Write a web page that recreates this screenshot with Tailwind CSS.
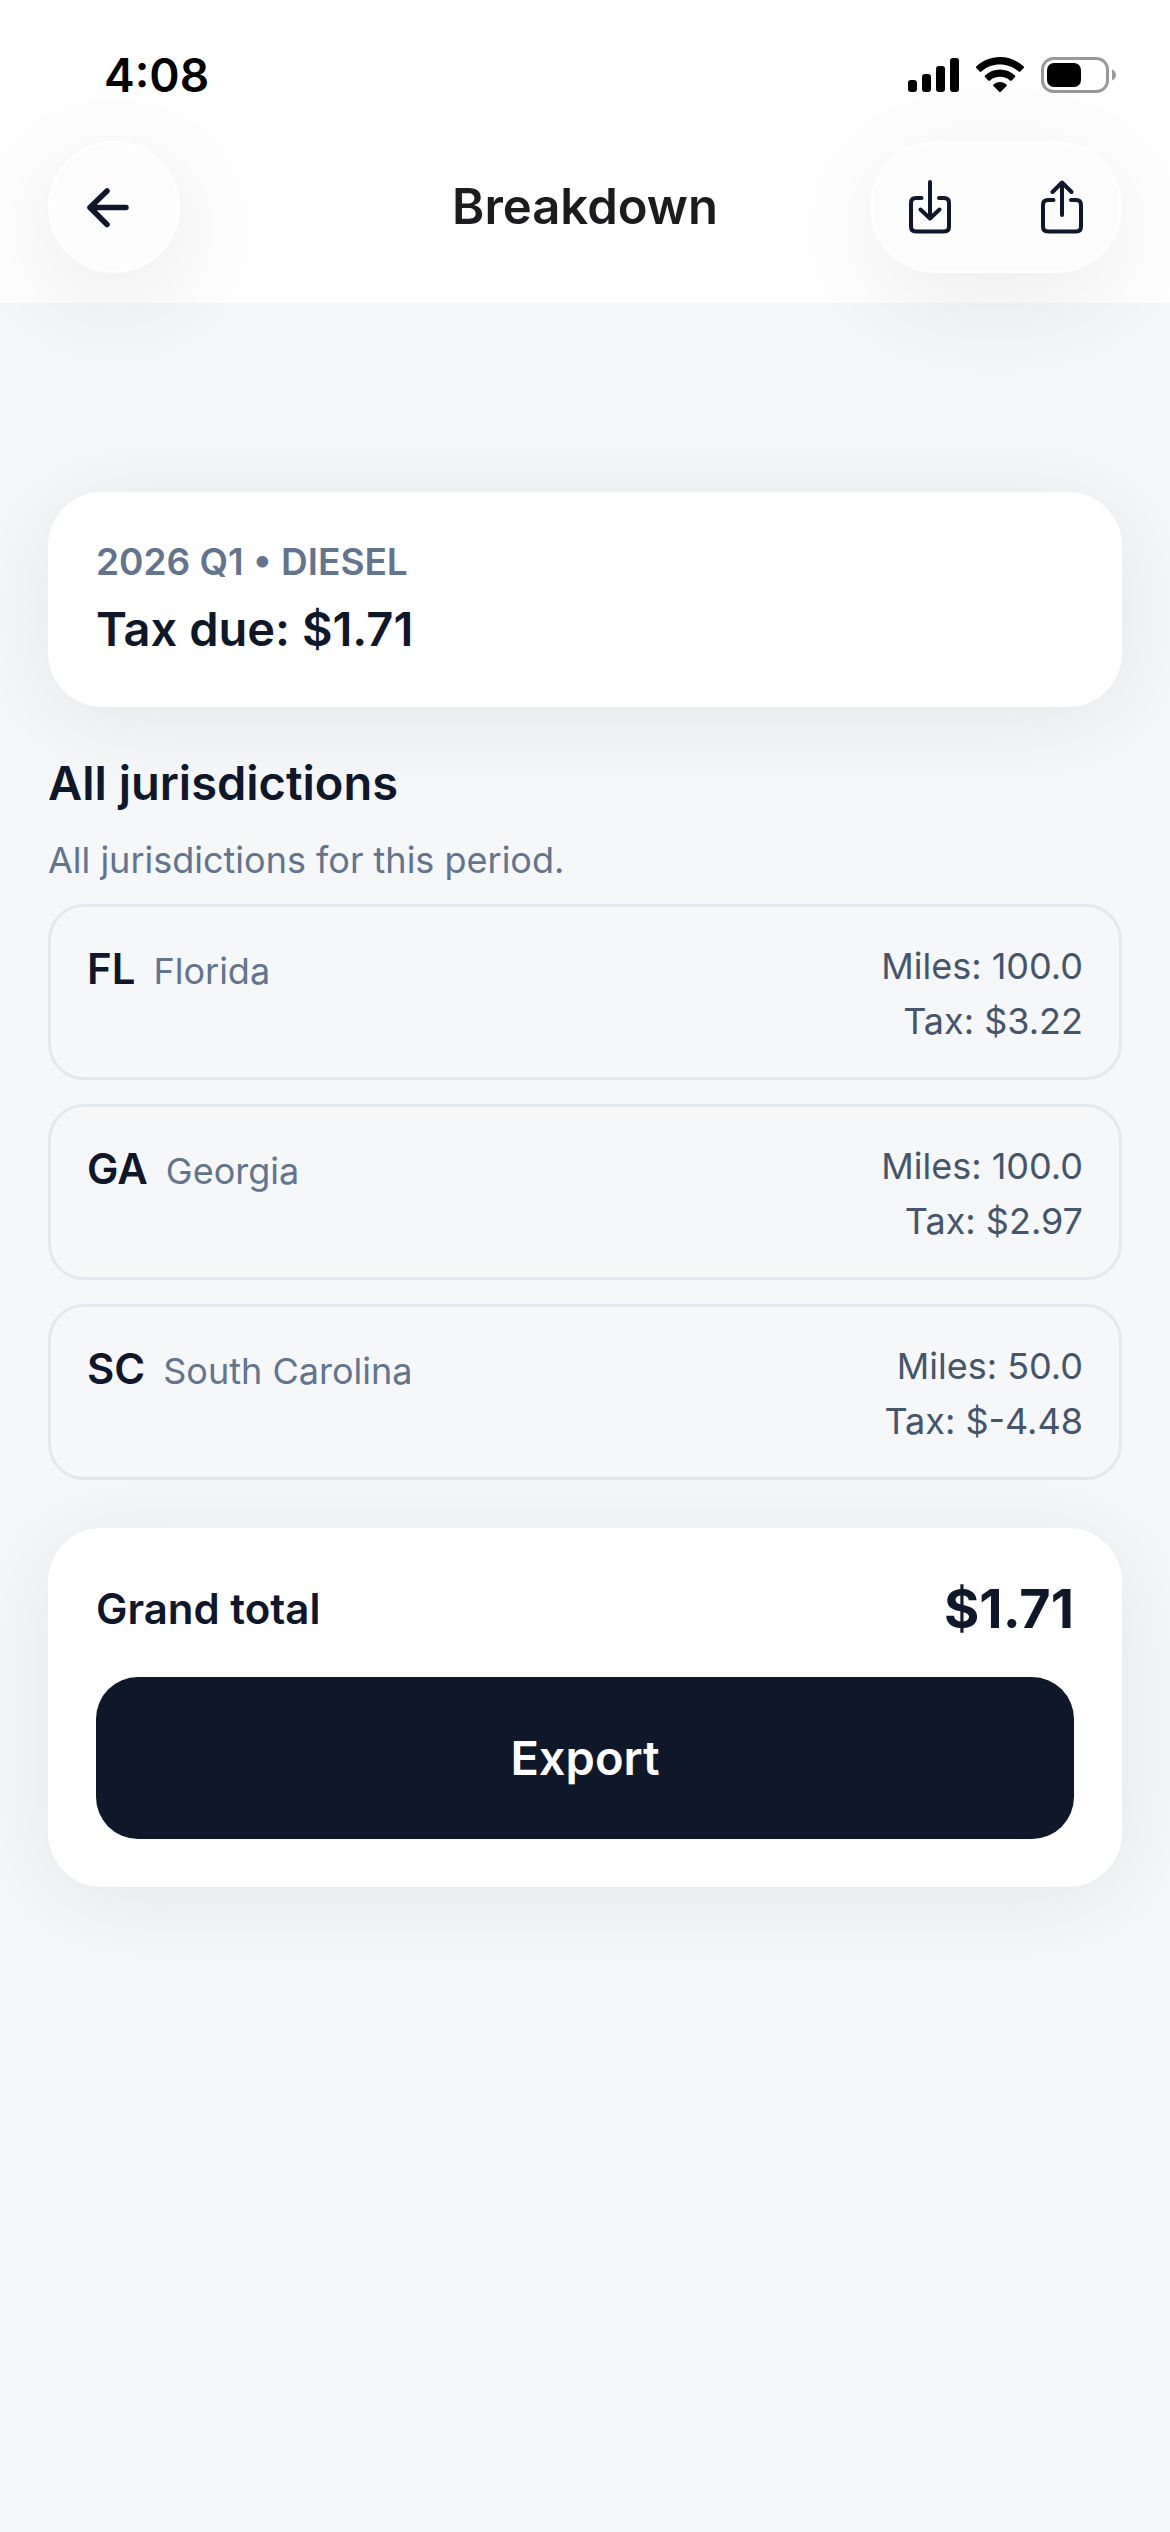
<!DOCTYPE html>
<html lang="en">

<head>
    <meta charset="UTF-8">
    <meta name="viewport" content="width=device-width, initial-scale=1.0">
    <title>Breakdown</title>
    <script src="https://cdn.jsdelivr.net/npm/@tailwindcss/browser@4"></script>
</head>

<body class="bg-[#f6f7f9] min-h-screen font-['Inter',sans-serif] text-slate-900">
    <header class="bg-white px-12 pb-[30px]">
        <!-- Status bar -->
        <div class="flex items-center justify-between h-[141px] pt-2 pl-14 pr-1 text-black">
            <span class="text-[46px] leading-[56px] font-semibold">4:08</span>
            <div class="flex items-center gap-4">
                <svg class="w-[52px] h-9" viewBox="0 0 52 36" fill="currentColor" aria-hidden="true">
                    <rect x="0" y="23" width="9" height="12" rx="3" />
                    <rect x="14" y="17" width="9" height="18" rx="3" />
                    <rect x="28" y="9" width="9" height="26" rx="3" />
                    <rect x="42" y="1" width="9" height="34" rx="3" />
                </svg>
                <svg class="w-12 h-9" viewBox="0 0 48 36" fill="currentColor" aria-hidden="true">
                    <path d="M24 0C33 0 41.500 3.500 47.700 9.500C48.200 10 48.200 10.600 47.700 11.100L44.300 14.600C43.800 15.100 43.200 15.100 42.700 14.600C37.600 9.900 31 7.400 24 7.400C17 7.400 10.400 9.900 5.300 14.600C4.800 15.100 4.200 15.100 3.700 14.600L.3 11.100C-.2 10.600 -.2 10 .3 9.500C6.500 3.500 15 0 24 0Z" />
                    <path d="M24 12.500C29.700 12.500 35 14.700 39 18.500C39.500 19 39.500 19.600 39 20.100L35.600 23.500C35.100 24 34.500 24 34 23.500C31.300 21.100 27.800 19.800 24 19.800C20.200 19.800 16.700 21.100 14 23.500C13.500 24 12.900 24 12.400 23.500L9 20.100C8.500 19.600 8.500 19 9 18.500C13 14.700 18.300 12.500 24 12.500Z" />
                    <path d="M24 25C26.500 25 28.800 25.900 30.500 27.400C31 27.900 31 28.500 30.500 29L24.800 34.800C24.300 35.300 23.700 35.300 23.200 34.800L17.500 29C17 28.500 17 27.900 17.500 27.400C19.200 25.900 21.500 25 24 25Z" />
                </svg>
                <svg class="w-[78px] h-9" viewBox="0 0 78 36" aria-hidden="true">
                    <rect x="2.500" y="1.500" width="65" height="33" rx="11" fill="none" stroke="#999" stroke-width="3" />
                    <rect x="7" y="6" width="34" height="24" rx="7" fill="currentColor" />
                    <path d="M72 12.500C74.500 13.500 76 15.500 76 18C76 20.500 74.500 22.500 72 23.500Z" fill="#999" />
                </svg>
            </div>
        </div>

        <!-- Navigation bar -->
        <nav class="grid grid-cols-[1fr_auto_1fr] items-center">
            <button type="button" aria-label="Back"
                class="relative size-[132px] rounded-full border-3 border-white bg-[#fdfdfd] shadow-[0_24px_120px_rgba(0,0,0,0.11)]">
                <svg class="size-full" viewBox="3 3 126 126" fill="none" stroke="currentColor" stroke-width="5.500" stroke-linecap="round" stroke-linejoin="round">
                    <path d="M59 50L42 66.500L59 83.500M42 66.500H78" />
                </svg>
            </button>
            <h1 class="text-[49px] leading-[60px] font-semibold text-[#1c1c1e]">Breakdown</h1>
            <div
                class="relative justify-self-end flex justify-between w-[252px] h-[132px] rounded-full border-3 border-white bg-[#fdfdfd] shadow-[0_24px_120px_rgba(0,0,0,0.09)]">
                <button type="button" aria-label="Download" class="grid place-items-center w-[114px] h-full">
                    <svg class="w-[42px] h-[54px]" viewBox="0 0 42 54" fill="none" stroke="currentColor" stroke-width="4" stroke-linecap="round" stroke-linejoin="round">
                        <path d="M12.500 18H7Q2 18 2 23V46.500Q2 51.500 7 51.500H35Q40 51.500 40 46.500V23Q40 18 35 18H30" />
                        <path d="M21 2V38M11.500 29.500L21 38.500L30.500 29.500" />
                    </svg>
                </button>
                <button type="button" aria-label="Share" class="grid place-items-center w-[114px] h-full">
                    <svg class="w-[42px] h-[54px]" viewBox="0 0 42 54" fill="none" stroke="currentColor" stroke-width="4" stroke-linecap="round" stroke-linejoin="round">
                        <path d="M12.500 20H7Q2 20 2 25V46.500Q2 51.500 7 51.500H35Q40 51.500 40 46.500V25Q40 20 35 20H30" />
                        <path d="M21 35V2.500M11.500 12L21 2.500L30.500 12" />
                    </svg>
                </button>
            </div>
        </nav>
    </header>

    <main class="px-12 pt-[189px] pb-12">
        <section class="bg-white rounded-[54px] p-12 shadow-[0_12px_96px_rgba(0,0,0,0.08)]">
            <p class="text-[37px] leading-[44px] font-semibold text-slate-500">2026 Q1 • DIESEL</p>
            <p class="mt-[15px] text-[47px] leading-[60px] font-semibold">Tax due: $1.71</p>
        </section>

        <h2 class="mt-[46px] text-[47px] leading-[60px] font-semibold">All jurisdictions</h2>
        <p class="mt-5 text-[36px] leading-[55px] text-slate-500">All jurisdictions for this period.</p>

        <ul class="mt-4 space-y-6">
            <li class="flex justify-between h-44 px-9 pt-8 border-3 border-slate-200 rounded-[36px]">
                <div class="flex items-baseline gap-[18px]">
                    <span class="text-[42px] leading-[60px] font-semibold">FL</span>
                    <span class="text-[36px] text-slate-500">Florida</span>
                </div>
                <div class="text-[36px] leading-[55px] text-slate-600 text-right">
                    <p>Miles: 100.0</p>
                    <p>Tax: $3.22</p>
                </div>
            </li>
            <li class="flex justify-between h-44 px-9 pt-8 border-3 border-slate-200 rounded-[36px]">
                <div class="flex items-baseline gap-[18px]">
                    <span class="text-[42px] leading-[60px] font-semibold">GA</span>
                    <span class="text-[36px] text-slate-500">Georgia</span>
                </div>
                <div class="text-[36px] leading-[55px] text-slate-600 text-right">
                    <p>Miles: 100.0</p>
                    <p>Tax: $2.97</p>
                </div>
            </li>
            <li class="flex justify-between h-44 px-9 pt-8 border-3 border-slate-200 rounded-[36px]">
                <div class="flex items-baseline gap-[18px]">
                    <span class="text-[42px] leading-[60px] font-semibold">SC</span>
                    <span class="text-[36px] text-slate-500">South Carolina</span>
                </div>
                <div class="text-[36px] leading-[55px] text-slate-600 text-right">
                    <p>Miles: 50.0</p>
                    <p>Tax: $-4.48</p>
                </div>
            </li>
        </ul>

        <section class="mt-12 bg-white rounded-[54px] p-12 shadow-[0_12px_96px_rgba(0,0,0,0.08)]">
            <div class="flex items-center justify-between">
                <h2 class="text-[42px] leading-[65px] font-semibold">Grand total</h2>
                <span class="text-[54px] leading-[65px] font-bold">$1.71</span>
            </div>
            <button type="button"
                class="mt-9 w-full h-[162px] rounded-[42px] bg-[#0f172a] text-white text-[47px] leading-[60px] font-semibold">Export</button>
        </section>
    </main>
</body>

</html>
